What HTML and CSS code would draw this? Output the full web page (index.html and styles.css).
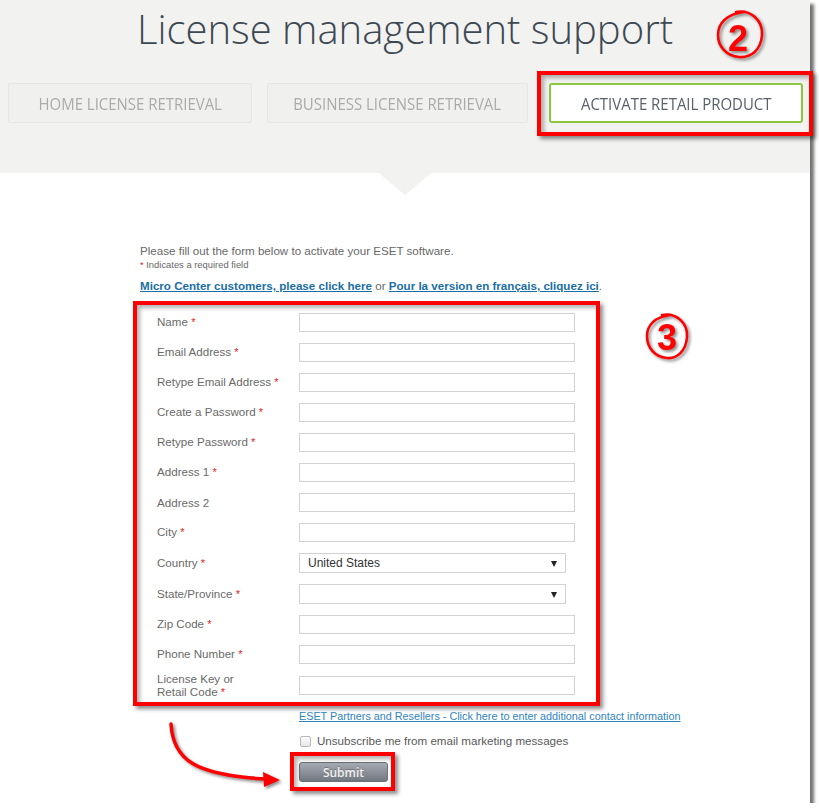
FILE: index.html
```html
<!DOCTYPE html>
<html lang="en">
<head>
<meta charset="utf-8">
<title>License management support</title>
<link rel="stylesheet" href="styles.css">
</head>
<body>
<div class="page">
  <header class="header">
    <h1 class="title">License management support</h1>
    <nav class="tabs">
      <a class="tab tab-home"><span class="tab-text">HOME LICENSE RETRIEVAL</span></a>
      <a class="tab tab-business"><span class="tab-text">BUSINESS LICENSE RETRIEVAL</span></a>
      <a class="tab tab-active"><span class="tab-text">ACTIVATE RETAIL PRODUCT</span></a>
    </nav>
  </header>

  <main class="content">
    <p class="intro">Please fill out the form below to activate your ESET software.</p>
    <p class="req-note"><span class="req-small">*</span> Indicates a required field</p>
    <p class="links"><a class="link-bold">Micro Center customers, please click here</a> or <a class="link-bold">Pour la version en français, cliquez ici</a>.</p>

    <form class="form-box">
      <div class="row"><label class="lbl">Name <span class="req">*</span></label><input class="field" type="text"></div>
      <div class="row"><label class="lbl">Email Address <span class="req">*</span></label><input class="field" type="text"></div>
      <div class="row"><label class="lbl">Retype Email Address <span class="req">*</span></label><input class="field" type="text"></div>
      <div class="row"><label class="lbl">Create a Password <span class="req">*</span></label><input class="field" type="text"></div>
      <div class="row"><label class="lbl">Retype Password <span class="req">*</span></label><input class="field" type="text"></div>
      <div class="row"><label class="lbl">Address 1 <span class="req">*</span></label><input class="field" type="text"></div>
      <div class="row"><label class="lbl">Address 2</label><input class="field" type="text"></div>
      <div class="row"><label class="lbl">City <span class="req">*</span></label><input class="field" type="text"></div>
      <div class="row row-select"><label class="lbl">Country <span class="req">*</span></label><div class="select">United States</div></div>
      <div class="row row-select"><label class="lbl">State/Province <span class="req">*</span></label><div class="select"></div></div>
      <div class="row"><label class="lbl">Zip Code <span class="req">*</span></label><input class="field" type="text"></div>
      <div class="row"><label class="lbl">Phone Number <span class="req">*</span></label><input class="field" type="text"></div>
      <div class="row row-tall"><label class="lbl">License Key or<br>Retail Code <span class="req">*</span></label><input class="field" type="text"></div>
    </form>

    <a class="partners">ESET Partners and Resellers - Click here to enter additional contact information</a>
    <div class="unsub"><span class="checkbox"></span>Unsubscribe me from email marketing messages</div>
    <button class="submit" type="button">Submit</button>
  </main>

  <div class="annot-box annot-tab"></div>
  <div class="annot-box annot-submit"></div>

  <svg class="annot-circle circle-two" width="60" height="60" viewBox="0 0 60 60">
    <path d="M26 6 C40 3 53 14 52 29 C51 44 41 52 29 51 C17 50 8 41 8 29 C8 17 17 8 34 6" fill="none" stroke="#f00" stroke-width="2.6" stroke-linecap="round"/>
    <text x="28" y="45" text-anchor="middle" class="digit">2</text>
  </svg>
  <svg class="annot-circle circle-three" width="60" height="60" viewBox="0 0 60 60">
    <path d="M22 5 C36 2 48 13 47 27 C46 41 37 49 27 48 C15 47 7 38 7 26 C7 15 15 7 30 5" fill="none" stroke="#f00" stroke-width="2.6" stroke-linecap="round"/>
    <text x="27" y="40" text-anchor="middle" class="digit">3</text>
  </svg>

  <svg class="annot-arrow" width="130" height="80" viewBox="0 0 130 80">
    <path d="M11 9 C13 45 35 60 106 64" fill="none" stroke="#f00" stroke-width="3.5" stroke-linecap="round"/>
    <polygon points="120,65 103,57 104,72" fill="#f00"/>
  </svg>
</div>
</body>
</html>
```

FILE: styles.css
```css
* {
  box-sizing: border-box;
}

body {
  margin: 0;
  background: #ffffff;
  font-family: "Liberation Sans", Arial, sans-serif;
}

.page {
  position: relative;
  width: 810px;
  height: 803px;
  background: #ffffff;
  box-shadow: 4px 4px 3px rgba(0, 0, 0, 0.55);
}

/* ---------- header ---------- */
.header {
  position: relative;
  height: 173px;
  padding-top: 1px;
  background: #f2f2f0;
}

.header::after {
  content: "";
  position: absolute;
  left: 379px;
  top: 173px;
  border-left: 26px solid transparent;
  border-right: 26px solid transparent;
  border-top: 22px solid #f2f2f0;
}

.title {
  margin: 0;
  font-family: "Open Sans", sans-serif;
  font-weight: 300;
  font-size: 40px;
  line-height: 56px;
  color: #3e4853;
  text-align: center;
}

.tabs {
  display: flex;
  margin-top: 26px;
  padding-left: 8px;
}

.tab {
  height: 40px;
  display: flex;
  align-items: center;
  justify-content: center;
  font-family: "Open Sans", sans-serif;
  font-size: 17px;
  color: #ababab;
  background: #f0f0ee;
  border: 1px solid #e6e6e4;
  border-radius: 2px;
}

.tab-text {
  display: inline-block;
  white-space: nowrap;
  transform: scaleX(0.88);
}

.tab-home {
  width: 244px;
}

.tab-business {
  width: 261px;
  margin-left: 15px;
}

.tab-active {
  width: 254px;
  margin-left: 21px;
  background: #ffffff;
  border: 2px solid #8cc63f;
  border-radius: 3px;
  color: #59616a;
}

/* ---------- content ---------- */
.content {
  padding: 71px 0 0 133px;
}

.intro,
.req-note,
.links {
  margin: 0 0 0 7px;
  line-height: 14px;
  color: #686868;
}

.intro {
  font-size: 11.6px;
}

.req-note {
  height: 14px;
  font-size: 9.4px;
}

.req-small {
  color: #e2231a;
}

.links {
  margin-top: 7px;
  font-size: 11.6px;
}

.link-bold {
  font-weight: bold;
  color: #1b6ea5;
  text-decoration: underline;
}

.req {
  color: #e2231a;
  font-size: 11px;
}

.form-box {
  width: 467px;
  margin: 8px 0 0 0;
  padding: 2px 0 0 20px;
  border: 4px solid #ff0000;
  box-shadow: 3px 3px 4px rgba(0, 0, 0, 0.45), inset 3px 3px 4px rgba(0, 0, 0, 0.3);
}

.row {
  display: flex;
  align-items: center;
  height: 30px;
}

.row-select {
  height: 31px;
}

.row-tall {
  height: 33px;
}

.lbl {
  width: 142px;
  font-size: 11.6px;
  line-height: 13px;
  color: #6a6a6a;
}

.field {
  width: 276px;
  height: 19px;
  margin: 0;
  padding: 0;
  border: 1px solid #d2d2d2;
  background: #ffffff;
}

.select {
  position: relative;
  display: flex;
  align-items: center;
  width: 267px;
  height: 20px;
  padding-left: 8px;
  border: 1px solid #d2d2d2;
  background: #ffffff;
  font-size: 12px;
  color: #333333;
}

.select::after {
  content: "";
  position: absolute;
  right: 8px;
  top: 7px;
  border-left: 3.5px solid transparent;
  border-right: 3.5px solid transparent;
  border-top: 6px solid #222222;
}

.partners {
  display: block;
  margin: 3px 0 0 166px;
  font-size: 10.8px;
  line-height: 14px;
  color: #2f84bf;
  text-decoration: underline;
}

.unsub {
  display: flex;
  align-items: center;
  margin: 11px 0 0 167px;
  font-size: 11.6px;
  line-height: 14px;
  color: #595959;
}

.checkbox {
  width: 11px;
  height: 11px;
  margin-right: 6px;
  border: 1px solid #b8b8b8;
  border-radius: 2px;
  background: linear-gradient(#fdfdfd, #e6e6e6);
}

.submit {
  display: block;
  width: 89px;
  height: 20px;
  margin: 14px 0 0 166px;
  padding: 0;
  border: 1px solid #6a6e76;
  border-radius: 3px;
  background: linear-gradient(#a6aab2, #73777f);
  font-family: "Open Sans", sans-serif;
  font-weight: 600;
  font-size: 12px;
  color: #f2f2f2;
  text-shadow: 0 -1px 0 rgba(0, 0, 0, 0.25);
}

/* ---------- annotations ---------- */
.annot-box {
  position: absolute;
  border: 4px solid #ff0000;
  box-shadow: 3px 3px 4px rgba(0, 0, 0, 0.45), inset 3px 3px 4px rgba(0, 0, 0, 0.3);
}

.annot-tab {
  left: 537px;
  top: 71px;
  width: 276px;
  height: 65px;
}

.annot-submit {
  left: 290px;
  top: 752px;
  width: 105px;
  height: 39px;
}

.annot-circle,
.annot-arrow {
  position: absolute;
  filter: drop-shadow(2px 2px 1.5px rgba(0, 0, 0, 0.45));
}

.circle-two {
  left: 710px;
  top: 6px;
}

.circle-three {
  left: 640px;
  top: 310px;
}

.annot-arrow {
  left: 160px;
  top: 715px;
}

.digit {
  font-family: "Liberation Sans", Arial, sans-serif;
  font-weight: bold;
  font-size: 36px;
  fill: #ff0000;
}
```
